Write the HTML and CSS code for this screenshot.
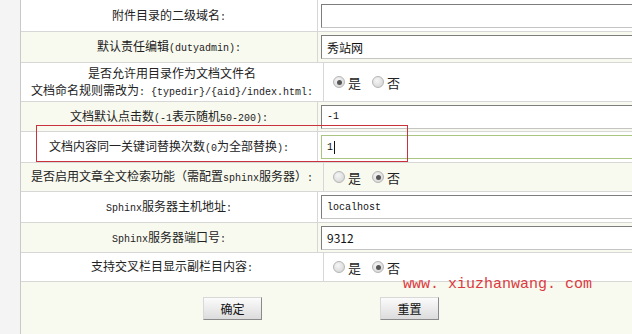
FILE: index.html
```html
<!DOCTYPE html>
<html lang="zh-CN">
<head>
  <meta charset="UTF-8">
  <title>系统参数设置</title>
  <link rel="stylesheet" href="styles.css">
</head>
<body>
  <div class="page">
    <div class="form">
      <div class="row white h30">
        <div class="label"><span>附件目录的二级域名<span class="a">:</span></span></div>
        <div class="value"><input class="field" type="text" value=""></div>
      </div>
      <div class="row cream">
        <div class="label"><span>默认责任编辑<span class="a">(dutyadmin):</span></span></div>
        <div class="value"><input class="field" type="text" value="秀站网"></div>
      </div>
      <div class="row white tall">
        <div class="label"><span>是否允许用目录作为文档文件名<br>文档命名规则需改为<span class="a">: {typedir}/{aid}/index.html:</span></span></div>
        <div class="value radios">
          <label><span class="radio checked"></span>是</label>
          <label><span class="radio"></span>否</label>
        </div>
      </div>
      <div class="row cream h29">
        <div class="label"><span>文档默认点击数<span class="a">(-1</span>表示随机<span class="a">50-200):</span></span></div>
        <div class="value"><input class="field mono" type="text" value="-1"></div>
      </div>
      <div class="row white">
        <div class="label"><span>文档内容同一关键词替换次数<span class="a">(0</span>为全部替换<span class="a">):</span></span></div>
        <div class="value"><div class="field focus mono">1<span class="caret"></span></div></div>
      </div>
      <div class="row cream h28">
        <div class="label"><span>是否启用文章全文检索功能（需配置<span class="a">sphinx</span>服务器）<span class="a">:</span></span></div>
        <div class="value radios">
          <label><span class="radio"></span>是</label>
          <label><span class="radio checked"></span>否</label>
        </div>
      </div>
      <div class="row white">
        <div class="label"><span><span class="a">Sphinx</span>服务器主机地址<span class="a">:</span></span></div>
        <div class="value"><input class="field mono" type="text" value="localhost"></div>
      </div>
      <div class="row cream h29">
        <div class="label"><span><span class="a">Sphinx</span>服务器端口号<span class="a">:</span></span></div>
        <div class="value"><input class="field" type="text" value="9312"></div>
      </div>
      <div class="row white h28">
        <div class="label"><span>支持交叉栏目显示副栏目内容<span class="a">:</span></span></div>
        <div class="value radios">
          <label><span class="radio"></span>是</label>
          <label><span class="radio checked"></span>否</label>
        </div>
      </div>
      <div class="actions cream">
        <button class="btn" type="submit">确定</button>
        <button class="btn" type="reset">重置</button>
      </div>
    </div>
    <div class="mark-box"></div>
    <div class="watermark">www. xiuzhanwang. com</div>
  </div>
</body>
</html>
```

FILE: styles.css
```css
body {
  margin: 0;
  background-color: #f4f4f4;
  font-family: "Noto Sans CJK SC", sans-serif;
  font-size: 12px;
  color: #222;
}
.page {
  position: relative;
  width: 632px;
  height: 334px;
  overflow: hidden;
}
.form {
  margin-left: 20px;
  width: 700px;
  border-left: 1px solid #c9c9c9;
}
.row {
  display: flex;
  height: 30px;
  border-bottom: 1px solid #d7d7d7;
}
.row.h30 { height: 31px; }
.row.h29 { height: 29px; }
.row.h28 { height: 28px; }
.row.tall { height: 38px; }
.white { background-color: #ffffff; }
.cream { background-color: #f9faef; }

.label {
  width: 302px;
  border-right: 1px solid #d7d7d7;
  display: flex;
  align-items: center;
  justify-content: center;
  text-align: center;
  line-height: 17px;
  white-space: nowrap;
}
.a {
  font-family: "Liberation Mono", monospace;
  font-size: 10px;
}
.value {
  flex: 1;
  display: flex;
  align-items: center;
  padding-left: 3px;
}
.field {
  box-sizing: border-box;
  width: 400px;
  height: 24px;
  padding: 0 5px;
  border: 1px solid;
  border-color: #7d7d7d #c4c4c4 #c4c4c4 #7d7d7d;
  background-color: #fff;
  font-family: "Noto Sans CJK SC", sans-serif;
  font-size: 12px;
  color: #111;
  outline: none;
}
.field.mono {
  font-family: "Liberation Mono", monospace;
  font-size: 10px;
}
.field.focus {
  display: flex;
  align-items: center;
  border-color: #a9c57f;
}
.caret {
  display: inline-block;
  width: 1px;
  height: 13px;
  margin-left: 1px;
  background-color: #111;
}

.radios {
  padding-left: 9px;
  gap: 11px;
  font-size: 13px;
}
.radios label {
  display: flex;
  align-items: center;
  gap: 3px;
}
.radio {
  box-sizing: border-box;
  width: 12px;
  height: 12px;
  border-radius: 50%;
  border: 1px solid #b5b5b5;
  background: radial-gradient(circle at 40% 35%, #f6f6f6, #d0d0d0);
  display: flex;
  align-items: center;
  justify-content: center;
}
.radio.checked::after {
  content: "";
  width: 5px;
  height: 5px;
  border-radius: 50%;
  background-color: #555;
}

.actions {
  height: 60px;
  display: flex;
  align-items: flex-start;
  padding-top: 15px;
  padding-left: 182px;
  gap: 118px;
  box-sizing: border-box;
}
.btn {
  width: 59px;
  height: 23px;
  padding: 0;
  border: 1px solid;
  border-color: #d8d8d8 #8a8a8a #8a8a8a #d8d8d8;
  background: linear-gradient(#fbfbfb, #dcdcdc);
  font-family: "Noto Sans CJK SC", sans-serif;
  font-size: 12px;
  color: #111;
}

.mark-box {
  position: absolute;
  left: 36px;
  top: 125px;
  width: 370px;
  height: 35px;
  border: 1px solid #c9323d;
}
.watermark {
  position: absolute;
  left: 403px;
  top: 276px;
  font-family: "Liberation Mono", monospace;
  font-size: 15px;
  color: #dc3a42;
}
```
